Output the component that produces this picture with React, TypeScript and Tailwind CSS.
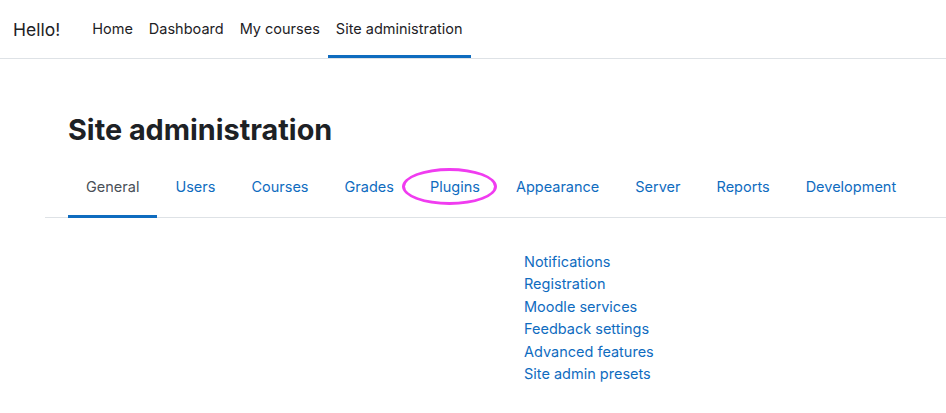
const navItems = ["Home", "Dashboard", "My courses", "Site administration"];
const tabs = ["General", "Users", "Courses", "Grades", "Plugins", "Appearance", "Server", "Reports", "Development"];
const links = [
  "Notifications",
  "Registration",
  "Moodle services",
  "Feedback settings",
  "Advanced features",
  "Site admin presets",
];

export default function App() {
  return (
    <div className="h-[413px] w-[946px] overflow-hidden bg-white text-[#1d2125] font-['Inter',sans-serif] text-[14.5px]">
      {/* Top navbar */}
      <nav className="flex h-[59px] items-stretch border-b border-[#dee2e6]">
        <div className="flex items-center pl-[13px] pr-[24px] pt-[3px] text-[17.5px]">Hello!</div>
        <ul className="flex items-stretch">
          {navItems.map((n, i) => (
            <li
              key={n}
              className={`flex items-center px-[8px] pt-[3px] border-b-[3px] ${
                i === 3 ? "border-[#0f6cbf]" : "border-transparent"
              }`}
            >
              {n}
            </li>
          ))}
        </ul>
      </nav>

      {/* Page */}
      <div className="pl-[45px]">
        <h1 className="pl-[23px] pt-[50px] text-[28.8px] font-bold leading-[42px]">Site administration</h1>

        <div className="mt-[9px] flex border-b border-[#dee2e6] pl-[23px]">
          {tabs.map((t, i) => (
            <div
              key={t}
              className={`relative px-[18px] pt-[16px] pb-[17px] leading-[22px] border-b-[3px] -mb-px ${
                i === 0 ? "border-[#0f6cbf] text-[#495057]" : "border-transparent text-[#0f6cbf]"
              }`}
            >
              {t}
              {t === "Plugins" && (
                <span className="pointer-events-none absolute left-[-10px] top-[8px] h-[37px] w-[95px] rounded-[50%] border-[3px] border-[#f03cf0]" />
              )}
            </div>
          ))}
        </div>

        <ul className="pl-[479px] pt-[33px] leading-[22.4px] text-[#0f6cbf]">
          {links.map((l) => (
            <li key={l}>{l}</li>
          ))}
        </ul>
      </div>
    </div>
  );
}
